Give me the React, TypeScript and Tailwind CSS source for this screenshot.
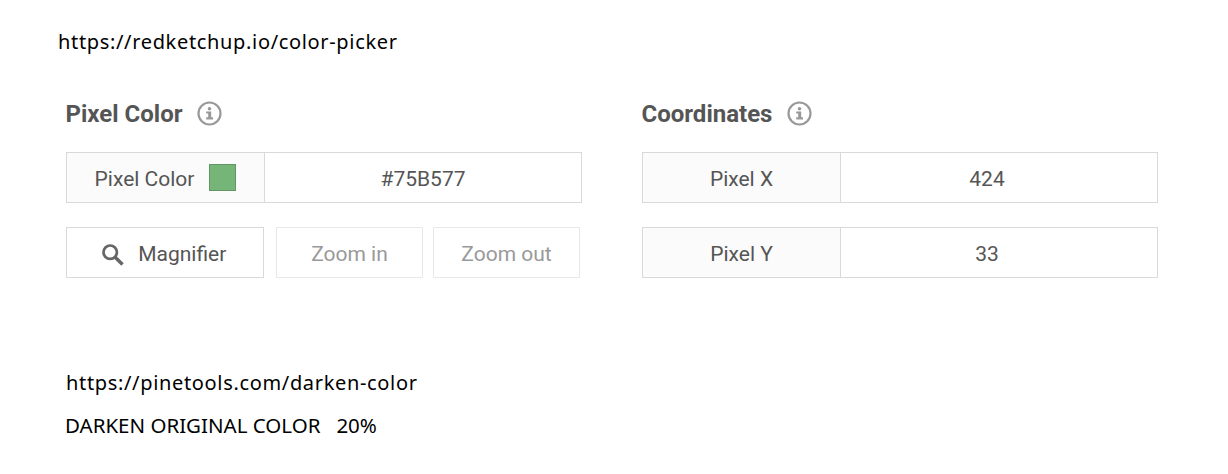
import type { ReactNode } from "react";

function InfoIcon() {
  return (
    <svg width="25" height="25" viewBox="0 0 25 25" fill="none" className="-mt-[2px] shrink-0">
      <circle cx="12.5" cy="12.5" r="11" stroke="#999999" strokeWidth="2.2" />
      <circle cx="12.5" cy="7.8" r="1.8" fill="#999999" />
      <path d="M9.2 10.5H14.2V16.2H16V18.5H9.2V16.2H11.2V12.6H9.2Z" fill="#999999" />
    </svg>
  );
}

function SearchIcon() {
  return (
    <svg width="22" height="22" viewBox="0 0 22 22" fill="none" className="shrink-0">
      <circle cx="8.2" cy="8.2" r="6.7" stroke="#666666" strokeWidth="2.7" />
      <path d="M13.2 13.2L20.5 20.5" stroke="#666666" strokeWidth="3.4" />
    </svg>
  );
}

function Heading({ children }: { children: string }) {
  return (
    <h2 className="-ml-[0.5px] flex h-7 items-center gap-[14.5px] text-[24px] leading-7 font-bold text-[#555555]">
      <span>{children}</span>
      <InfoIcon />
    </h2>
  );
}

function Field({ label, children }: { label: ReactNode; children: ReactNode }) {
  return (
    <div className="flex h-[51px] w-[516px] border border-[#d9d9d9]">
      <div className="flex w-[198px] items-center justify-center gap-[15px] border-r border-[#d9d9d9] bg-[#fbfbfb] pt-1">
        {label}
      </div>
      <div className="flex flex-1 items-center justify-center pt-1">{children}</div>
    </div>
  );
}

export default function App() {
  return (
    <main className="h-[474px] w-[1228px] overflow-hidden bg-white font-['Roboto',sans-serif] text-[21px] text-[#555555]">
      <p className="ml-[58px] pt-[28px] font-['Noto_Sans',sans-serif] text-[20px] leading-7 tracking-[0.66px] text-black">
        https://redketchup.io/color-picker
      </p>
      <div className="mt-[44px] ml-[66px] flex gap-[60px]">
        <section className="w-[516px]">
          <Heading>Pixel Color</Heading>
          <div className="mt-6 flex flex-col gap-6">
            <Field
              label={
                <>
                  <span>Pixel Color</span>
                  <span className="-mt-1 size-[27px] border border-[#629665] bg-[#75b577]" />
                </>
              }
            >
              #75B577
            </Field>
            <div className="flex h-[51px]">
              <button className="flex w-[198px] items-center justify-center gap-[14.5px] border border-[#d9d9d9] pt-1 pr-[2px]">
                <SearchIcon />
                <span>Magnifier</span>
              </button>
              <button className="ml-3 w-[147px] border border-[#e8e8e8] pt-1 text-[#999999]">Zoom in</button>
              <button className="ml-[10px] w-[147px] border border-[#e8e8e8] pt-1 text-[#999999]">Zoom out</button>
            </div>
          </div>
        </section>
        <section className="w-[516px]">
          <Heading>Coordinates</Heading>
          <div className="mt-6 flex flex-col gap-6">
            <Field label="Pixel X">
              <span className="pr-6">424</span>
            </Field>
            <Field label="Pixel Y">
              <span className="pr-6">33</span>
            </Field>
          </div>
        </section>
      </div>
      <div className="mt-[91px] ml-[66px] flex flex-col gap-[14px] font-['Noto_Sans',sans-serif] leading-7 whitespace-pre text-black">
        <p className="text-[20px] leading-7 tracking-[0.66px]">https://pinetools.com/darken-color</p>
        <p className="-ml-px text-[20.5px] leading-7">{"DARKEN ORIGINAL COLOR   20%"}</p>
      </div>
    </main>
  );
}
